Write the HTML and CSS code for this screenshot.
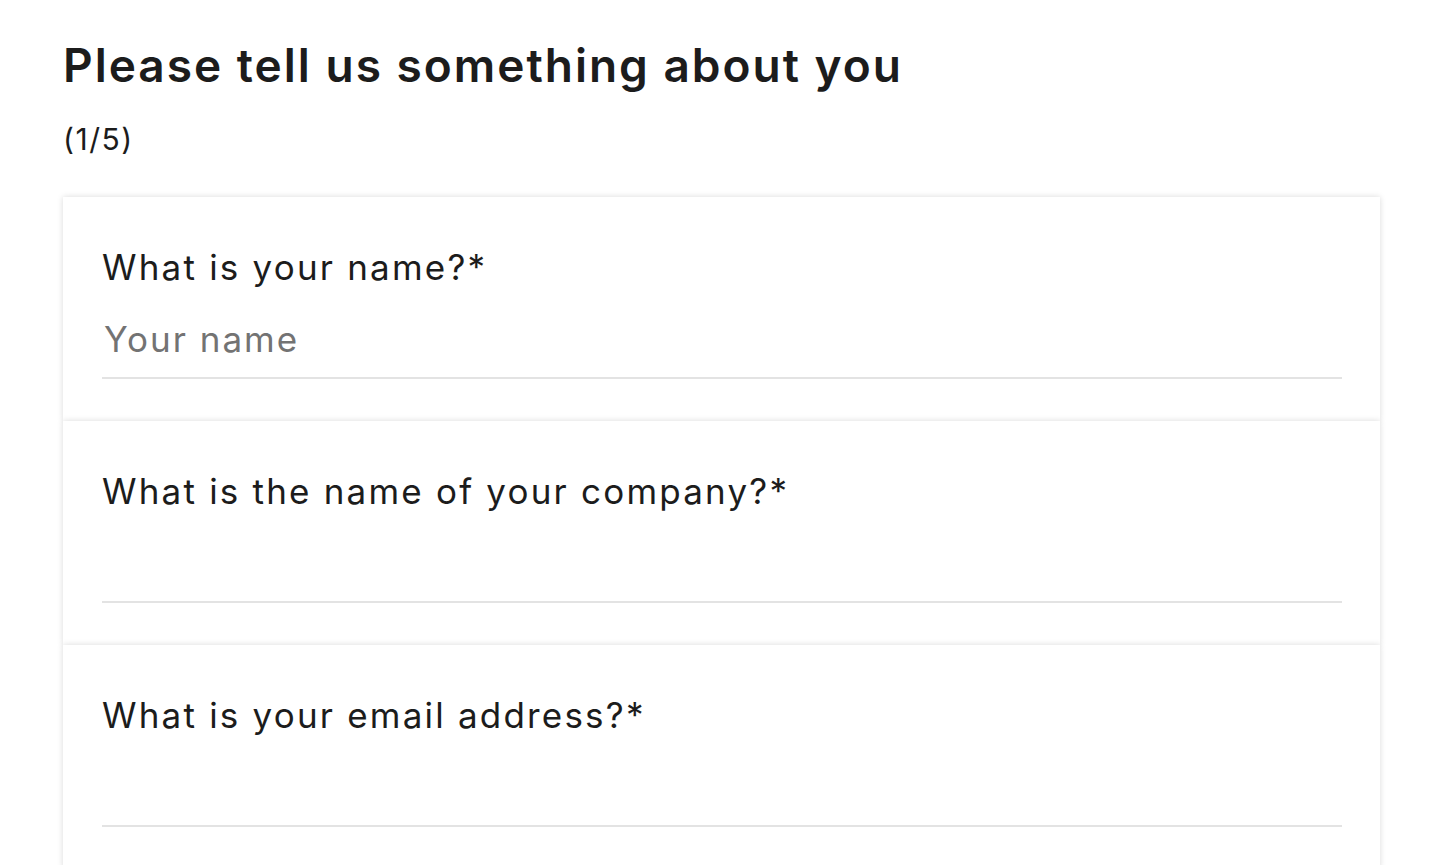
FILE: index.html
```html
<!DOCTYPE html>
<html lang="en">
<head>
<meta charset="utf-8">
<title>Survey</title>
<link rel="stylesheet" href="styles.css">
</head>
<body>
<main class="page">
  <h1 class="title">Please tell us something about you</h1>
  <p class="step">(1/5)</p>
  <section class="cards">
    <div class="card">
      <label class="question" for="q1">What is your name?*</label>
      <input class="answer" id="q1" type="text" placeholder="Your name">
    </div>
    <div class="card">
      <label class="question" for="q2">What is the name of your company?*</label>
      <input class="answer" id="q2" type="text">
    </div>
    <div class="card">
      <label class="question" for="q3">What is your email address?*</label>
      <input class="answer" id="q3" type="email">
    </div>
  </section>
</main>
</body>
</html>
```
FILE: styles.css
```css
html, body {
  margin: 0;
  padding: 0;
  background: #ffffff;
}
body {
  font-family: Inter, "Open Sans", sans-serif;
  color: #1c1c1c;
  overflow: hidden;
}
.page {
  padding: 0 76px 0 63px;
}
.title {
  margin: 0;
  padding-top: 37px;
  font-size: 46px;
  line-height: 56px;
  font-weight: 600;
  letter-spacing: 2px;
}
.step {
  margin: 28px 0 0;
  font-size: 30px;
  line-height: 36px;
  letter-spacing: 1.5px;
}
.cards {
  margin-top: 40px;
  display: flex;
  flex-direction: column;
  gap: 0;
}
.card {
  background: #fff;
  box-shadow: 0 0 6px rgba(0, 0, 0, 0.15);
  padding: 48px 38px 42px 39px;
  display: flex;
  flex-direction: column;
  height: 224px;
  box-sizing: border-box;
}
.question {
  font-size: 35px;
  line-height: 44px;
  font-weight: 400;
  letter-spacing: 2.2px;
}
.answer {
  margin-top: auto;
  border: none;
  border-bottom: 2px solid #e3e3e3;
  outline: none;
  font-family: inherit;
  font-size: 35px;
  letter-spacing: 2px;
  padding: 0 2px 17px;
  color: #1c1c1c;
  background: transparent;
}
.answer::placeholder {
  color: #737373;
}
```
